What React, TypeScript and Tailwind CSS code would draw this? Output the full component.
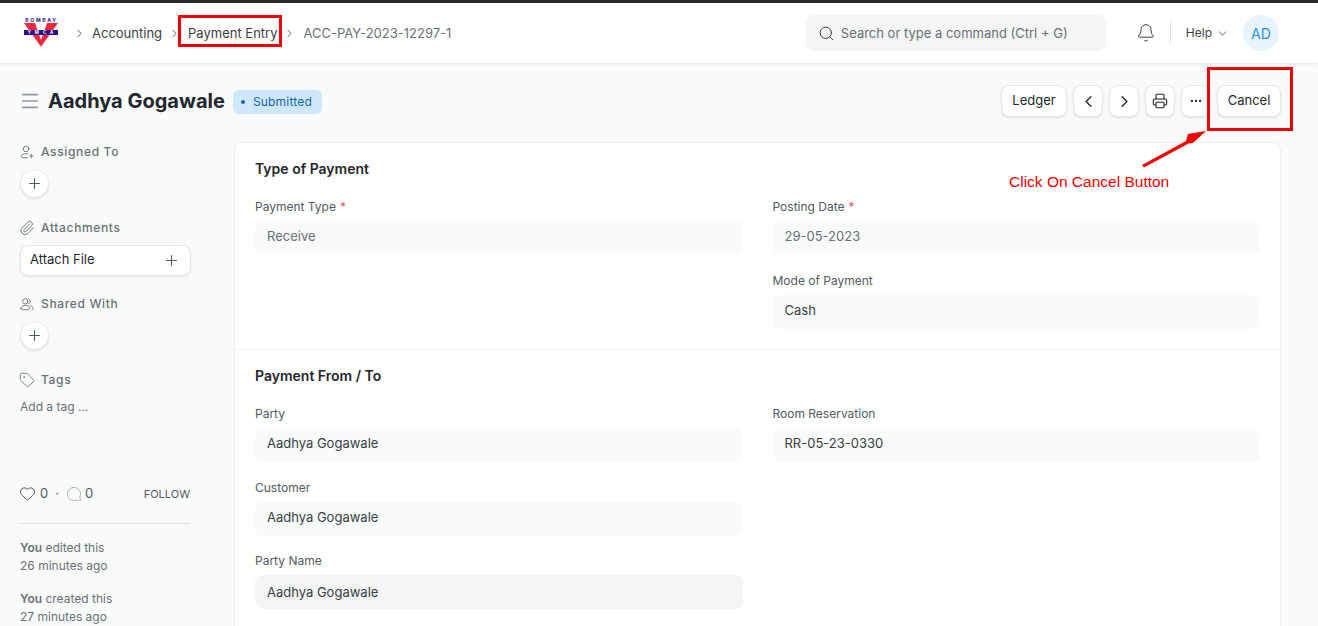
import React from "react";
import {
  Bell,
  ChevronDown,
  ChevronLeft,
  ChevronRight,
  Ellipsis,
  Heart,
  Menu,
  MessageCircle,
  Paperclip,
  Plus,
  Printer,
  Search,
  Tag,
} from "lucide-react";

function Logo() {
  return (
    <svg width="36" height="32" viewBox="0 0 36 32" className="shrink-0">
      <text x="17.5" y="4.8" textAnchor="middle" fontSize="5" fontWeight="700" letterSpacing="1.7" fill="#1c1480" fontFamily="Inter, sans-serif">
        BOMBAY
      </text>
      <polygon points="0,6 34,6 17,29.7" fill="#f0283a" />
      <polygon points="11,6 23,6 17,23" fill="#ffffff" />
      <rect x="0" y="13" width="34" height="5" fill="#2c0a8c" />
      <text x="18.5" y="17.2" textAnchor="middle" fontSize="4.4" fontWeight="700" letterSpacing="4" fill="#ffffff" fontFamily="Inter, sans-serif">
        YMCA
      </text>
    </svg>
  );
}

function AssignIcon() {
  return (
    <svg width="16" height="16" viewBox="0 0 16 16" fill="none" stroke="#687178" strokeWidth="1" strokeLinecap="round">
      <circle cx="7" cy="4.5" r="3.2" />
      <path d="M9.5 10.2C8.8 10 8 9.9 7 9.9c-3.4 0-5.5 1.2-5.5 3.2 0 .9.5 1.4 1.4 1.4h5.6" />
      <path d="M13 10.5v4M11 12.5h4" />
    </svg>
  );
}

function SharedIcon() {
  return (
    <svg width="16" height="16" viewBox="0 0 16 16" fill="none" stroke="#687178" strokeWidth="1" strokeLinecap="round">
      <circle cx="6" cy="5" r="3" />
      <path d="M1 13.2c0-2.4 2-3.7 5-3.7s5 1.3 5 3.7c0 .8-.4 1.3-1.2 1.3H2.2c-.8 0-1.2-.5-1.2-1.3z" />
      <path d="M9.8 2.2a3 3 0 0 1 0 5.6M12 10c1.8.5 3 1.6 3 3.2 0 .8-.4 1.3-1.2 1.3" />
    </svg>
  );
}

function Crumb({ children, muted }: { children: React.ReactNode; muted?: boolean }) {
  return <span className={muted ? "text-[#687178]" : "text-[#383f45]"}>{children}</span>;
}

function Sep() {
  return <ChevronRight size={13} strokeWidth={1.5} className="text-[#383f45]" />;
}

function Navbar() {
  return (
    <header className="h-[63px] shrink-0 border-t-[3px] border-[#2b2b2b] bg-white shadow-[0_1px_2px_rgba(25,39,52,0.08)] flex items-center pl-6 pr-[39px]">
      <Logo />
      <nav className="flex items-center text-[13px] ml-[13px] pt-[1px]">
        <Sep />
        <span className="ml-[6px]"><Crumb>Accounting</Crumb></span>
        <span className="ml-[6px]"><Sep /></span>
        <span className="ml-[7px]"><Crumb>Payment Entry</Crumb></span>
        <span className="ml-[6px]"><Sep /></span>
        <span className="ml-[7px]"><Crumb muted>ACC-PAY-2023-12297-1</Crumb></span>
      </nav>
      <div className="ml-auto w-[300px] h-9 rounded-lg bg-[#f4f5f6] flex items-center pl-3 gap-[6px] text-[13px] text-[#687178]">
        <Search size={17} strokeWidth={1.4} className="text-[#383f45]" />
        <span className="pt-[1px]">Search or type a command (Ctrl + G)</span>
      </div>
      <Bell size={20} strokeWidth={1.2} className="ml-[30px] text-[#383f45]" />
      <div className="ml-[14px] w-px h-6 bg-[#dfe3e6]" />
      <div className="ml-[15px] flex items-center gap-1 text-[12px] text-[#383f45]">
        Help
        <ChevronDown size={13} strokeWidth={1.5} />
      </div>
      <div className="ml-[14px] size-9 rounded-full bg-[#e8f4fd] text-[#2490ef] flex items-center justify-center text-[14px]">
        AD
      </div>
    </header>
  );
}

function ActionButton({ children, className }: { children: React.ReactNode; className?: string }) {
  return (
    <button className={`h-8 rounded-lg bg-white border border-[#e6e8ea] shadow-[0_1px_2px_rgba(25,39,52,0.12)] flex items-center justify-center text-[13px] text-[#1f272e] ${className ?? ""}`}>
      {children}
    </button>
  );
}

function TitleRow() {
  return (
    <div className="h-[79px] shrink-0 flex items-center pl-[19px] pr-[37px] pb-[3px]">
      <Menu size={22} strokeWidth={1.8} className="text-[#8d99a6]" />
      <h1 className="ml-[7px] text-[20px] font-bold text-[#1f272e] leading-none">Aadhya Gogawale</h1>
      <span className="ml-2 mt-[2px] h-6 pl-2 pr-[10px] rounded-md bg-[#cfe7fb] text-[#1366ae] text-[12px] tracking-[0.2px] flex items-center gap-[8px]">
        <span className="size-[4px] rounded-full bg-[#1366ae]" />
        Submitted
      </span>
      <div className="ml-auto flex items-center gap-[6px]">
        <ActionButton className="w-[66px]">Ledger</ActionButton>
        <ActionButton className="w-[30px]"><ChevronLeft size={19} strokeWidth={1.7} /></ActionButton>
        <ActionButton className="w-[30px]"><ChevronRight size={19} strokeWidth={1.7} /></ActionButton>
        <ActionButton className="w-[30px]"><Printer size={16} strokeWidth={1.6} /></ActionButton>
        <ActionButton className="w-[30px]"><Ellipsis size={14} strokeWidth={2} /></ActionButton>
        <ActionButton className="w-[64px]">Cancel</ActionButton>
      </div>
    </div>
  );
}

function SideHeading({ icon, children }: { icon: React.ReactNode; children: React.ReactNode }) {
  return (
    <div className="h-5 flex items-center gap-[7px] text-[12px] font-medium tracking-[0.65px] text-[#687178]">
      <span className="w-[14px] flex justify-center">{icon}</span>
      {children}
    </div>
  );
}

function RoundAdd() {
  return (
    <button className="mt-[7px] size-[29px] rounded-full bg-white border border-[#eceef0] shadow-[0_1px_2px_rgba(25,39,52,0.14)] flex items-center justify-center text-[#505a62]">
      <Plus size={17} strokeWidth={1.5} />
    </button>
  );
}

function Sidebar() {
  const iconCls = "text-[#687178] shrink-0";
  return (
    <aside className="w-[170px] ml-5 shrink-0">
      <SideHeading icon={<AssignIcon />}>Assigned To</SideHeading>
      <RoundAdd />
      <div className="mt-[20px]">
        <SideHeading icon={<Paperclip size={16} strokeWidth={1.4} className={iconCls} />}>Attachments</SideHeading>
      </div>
      <button className="mt-[7px] w-[171px] h-[31px] rounded-lg bg-white border border-[#e2e5e8] shadow-[0_1px_2px_rgba(25,39,52,0.1)] flex items-center justify-between pl-[9px] pr-[10px] pb-[1px] text-[13px] text-[#1f272e]">
        Attach File
        <Plus size={17} strokeWidth={1.5} className="text-[#505a62]" />
      </button>
      <div className="mt-[18px]">
        <SideHeading icon={<SharedIcon />}>Shared With</SideHeading>
      </div>
      <RoundAdd />
      <div className="mt-[20px]">
        <SideHeading icon={<Tag size={16} strokeWidth={1.3} className={iconCls} />}>Tags</SideHeading>
      </div>
      <p className="mt-[7px] text-[12px] leading-[20px] text-[#687178]">Add a tag ...</p>

      <div className="mt-[67px] flex items-center text-[13px] text-[#505a62]">
        <Heart size={17} strokeWidth={1.2} className="text-[#383f45] -ml-[1px]" />
        <span className="ml-[4px]">0</span>
        <span className="ml-[7px]">·</span>
        <MessageCircle size={16} strokeWidth={1.1} className="ml-[7px] text-[#98a1a9] -scale-x-100" />
        <span className="ml-[3px]">0</span>
        <span className="ml-auto text-[11px] text-[#505a62]">FOLLOW</span>
      </div>
      <div className="mt-[19px] h-px bg-[#dfe3e6]" />
      <div className="mt-[15px] text-[12px] leading-[18px] text-[#687178]">
        <p><b className="font-semibold">You</b> edited this</p>
        <p>26 minutes ago</p>
        <p className="mt-[15px]"><b className="font-semibold">You</b> created this</p>
        <p>27 minutes ago</p>
      </div>
    </aside>
  );
}

function Field({
  label,
  value,
  required,
  muted,
  dark,
}: {
  label: string;
  value: string;
  required?: boolean;
  muted?: boolean;
  dark?: boolean;
}) {
  return (
    <div className={`h-[74px] ${dark ? "-mt-[1px]" : ""}`}>
      <div className="h-[15px] flex items-center text-[12px] text-[#505a62]">
        {label}
        {required && <span className="ml-1 text-[#f0526b]">*</span>}
      </div>
      <div className={`mt-[7px] h-[34px] rounded-lg flex items-center px-3 text-[13px] ${dark ? "pt-[1px] bg-[#f4f5f6]" : "pb-[2px] bg-[#f9fafa]"} ${muted ? "text-[#687178]" : "text-[#383f45]"}`}>
        {value}
      </div>
    </div>
  );
}

function FormCard() {
  return (
    <main className="ml-[44px] w-[1047px] h-[520px] rounded-t-lg bg-white border border-[#eef0f1] shadow-[0_1px_2px_rgba(25,39,52,0.06)] overflow-hidden">
      <section className="h-[207px] border-b border-[#eef0f1] px-5 pt-[15px]">
        <h2 className="h-[20px] flex items-center text-[14px] font-semibold text-[#1f272e]">Type of Payment</h2>
        <div className="mt-[21px] grid grid-cols-2 gap-x-[30px]">
          <Field label="Payment Type" value="Receive" required muted />
          <div>
            <Field label="Posting Date" value="29-05-2023" required muted />
            <Field label="Mode of Payment" value="Cash" />
          </div>
        </div>
      </section>
      <section className="px-5 pt-[15px]">
        <h2 className="h-[20px] flex items-center text-[14px] font-semibold text-[#1f272e]">Payment From / To</h2>
        <div className="mt-[21px] grid grid-cols-2 gap-x-[30px]">
          <div>
            <Field label="Party" value="Aadhya Gogawale" />
            <Field label="Customer" value="Aadhya Gogawale" />
            <Field label="Party Name" value="Aadhya Gogawale" dark />
          </div>
          <Field label="Room Reservation" value="RR-05-23-0330" />
        </div>
      </section>
    </main>
  );
}

export default function App() {
  return (
    <div className="relative h-[626px] w-[1318px] overflow-hidden bg-[#f9fafa] flex flex-col font-['Inter',sans-serif]">
      <Navbar />
      <TitleRow />
      <div className="flex items-start">
        <Sidebar />
        <FormCard />
      </div>

      {/* tutorial annotations drawn over the page */}
      <div className="absolute left-[178px] top-[15px] w-[104px] h-[32px] border-[3px] border-[#f00000]" />
      <div className="absolute left-[1207px] top-[67px] w-[86px] h-[64px] border-[3px] border-[#f00000]" />
      <svg className="absolute left-[1140px] top-[128px]" width="70" height="40" viewBox="0 0 70 40">
        <polygon points="2,37 46,13 48,6 66,3 53,15 48.5,15.5 4,39.5" fill="#f00000" />
      </svg>
      <span className="absolute left-[1009px] top-[173px] text-[15.5px] leading-[18px] text-[#f00000] font-['Liberation_Sans',sans-serif]">
        Click On Cancel Button
      </span>
    </div>
  );
}
